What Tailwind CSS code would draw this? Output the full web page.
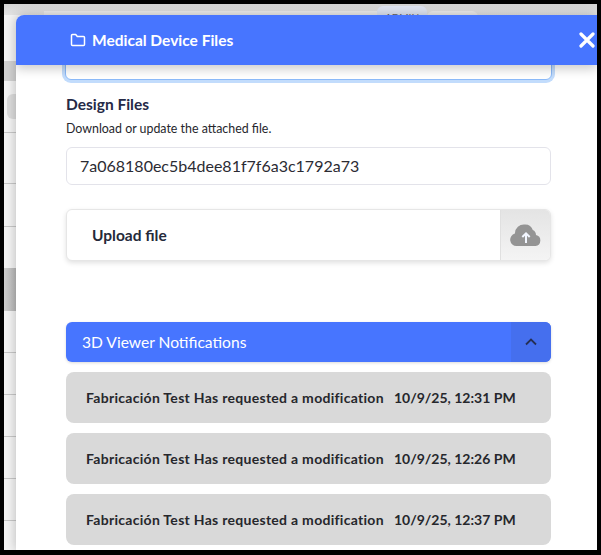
<!DOCTYPE html>
<html>
<head>
  <title>Medical Device Files</title>
  <script src="https://cdn.jsdelivr.net/npm/@tailwindcss/browser@4"></script>
</head>
<body class="bg-black font-['Lato','Noto_Sans',sans-serif]">
  <div class="h-[555px] w-[601px] overflow-hidden bg-black pt-[4px] pl-[4px] pr-[4px] pb-[5px]">
    <div class="relative flex h-[546px] w-[593px] flex-col overflow-hidden bg-[#f4f4f4]">

      <!-- Page behind the modal -->
      <div class="absolute inset-0">
        <div class="h-[11px] bg-gradient-to-b from-[#d4d4d4] to-[#e4e4e4]"></div>
        <div class="absolute left-[40px] top-[7px] h-[8px] w-[333px] bg-[#ececec]"></div>
        <div class="absolute left-[373px] top-[2px] h-[12px] w-[50px] rounded-t-md bg-[#dfe5f2] pt-[6px] text-center text-[10px] leading-[10px] text-[#666]">ADMIN</div>
        <div class="absolute left-[423px] top-[7px] h-[8px] w-[51px] rounded-t-md bg-[#ececec]"></div>
        <div class="absolute left-0 top-[57px] h-[20px] w-3 bg-[#d2d2d2]"></div>
        <div class="absolute left-[3px] top-[90px] h-[25px] w-[9px] rounded-l-md bg-[#dcdcdc]"></div>
        <div class="absolute left-0 top-[128px] h-px w-3 bg-[#c8c8c8]"></div>
        <div class="absolute left-0 top-[179px] h-px w-3 bg-[#c8c8c8]"></div>
        <div class="absolute left-0 top-[222px] h-px w-3 bg-[#c8c8c8]"></div>
        <div class="absolute left-0 top-[264px] h-[43px] w-3 bg-gradient-to-r from-[#cfcfcf] to-[#b8b8b8]"></div>
        <div class="absolute left-0 top-[348px] h-px w-3 bg-[#c8c8c8]"></div>
        <div class="absolute left-0 top-[390px] h-px w-3 bg-[#c8c8c8]"></div>
        <div class="absolute left-0 top-[432px] h-px w-3 bg-[#c8c8c8]"></div>
        <div class="absolute left-0 top-[474px] h-px w-3 bg-[#c8c8c8]"></div>
        <div class="absolute left-0 top-[516px] h-px w-3 bg-[#c8c8c8]"></div>
      </div>

      <!-- Modal -->
      <div class="relative mt-[11px] ml-3 flex h-[535px] w-[581px] flex-col overflow-hidden rounded-tl-lg bg-white shadow-[0_0_12px_rgba(0,0,0,0.25)]">
        <div class="z-10 flex h-[50px] shrink-0 items-center bg-[#4775ff] pl-[54px] pr-[2px] text-white shadow-[0_4px_10px_rgba(0,0,0,0.2)]">
          <svg class="mr-[6px] h-[16px] w-[16px]" viewBox="0 0 16 16" fill="none" stroke="currentColor" stroke-width="1.500" stroke-linejoin="round">
            <path d="M1.500 3.500a1 1 0 0 1 1-1h3.200l1.600 1.900h6.200a1 1 0 0 1 1 1v7a1 1 0 0 1-1 1h-11a1 1 0 0 1-1-1z"/>
          </svg>
          <span class="pt-[1px] text-[15.500px] font-bold leading-none">Medical Device Files</span>
          <svg class="ml-auto h-[16px] w-[16px]" viewBox="0 0 16 16" fill="none" stroke="currentColor" stroke-width="3.200" stroke-linecap="round">
            <path d="M2 2l12 12M14 2L2 14"/>
          </svg>
        </div>

        <div class="flex flex-col pl-[50px] pr-[46px]">
          <!-- Input cut off by the header -->
          <div class="-mx-[1px] -mt-[10px] h-[25px] rounded-md border border-[#8ab9f8] bg-white shadow-[0_0_0_3px_#c2dcfc]"></div>

          <div class="mt-[15px] text-[15.500px] font-bold leading-[18px] text-[#252a47]">Design Files</div>
          <div class="mt-[8px] text-[12.400px] leading-[15px] text-[#26262c]">Download or update the attached file.</div>

          <div class="mt-[11px] flex h-[38px] items-center rounded-md border border-[#e3e3ea] bg-white px-[13px] text-[16px] text-[#2b2b33]">7a068180ec5b4dee81f7f6a3c1792a73</div>

          <div class="mt-[24px] flex h-[52px] overflow-hidden rounded-md border border-[#e6e6e6] bg-white shadow-[0_2px_5px_rgba(0,0,0,0.12)]">
            <div class="flex flex-1 items-center pl-[25px] pt-[1px] text-[15.500px] font-bold text-[#252a3a]">Upload file</div>
            <div class="flex w-[50px] items-center justify-center border-l border-[#e0e0e0] bg-gradient-to-b from-[#e4e4e4] to-[#f4f4f4]">
              <svg class="h-[24px] w-[32px]" viewBox="0 0 32 24">
                <path fill="#949494" d="M6.500 23a6.300 6.300 0 0 1-1.600-12.400A9 9 0 0 1 15 1.500a8 8 0 0 1 7.800 5.600A5.600 5.600 0 0 1 26 12a5.600 5.600 0 0 1-.5 11z"/>
                <path fill="none" stroke="#f2f6ff" stroke-width="2" d="M16 20V10.500M12.300 14L16 10.300l3.700 3.700"/>
              </svg>
            </div>
          </div>

          <div class="mt-[61px] flex h-[40px] overflow-hidden rounded-md bg-[#4775ff] shadow-[0_1px_3px_rgba(0,0,0,0.15)]">
            <div class="flex flex-1 items-center pl-[16px] pt-[1px] text-[15.600px] text-white">3D Viewer Notifications</div>
            <div class="flex w-[40px] items-center justify-center bg-[#456fee]">
              <svg class="h-[12px] w-[12px]" viewBox="0 0 12 12" fill="none" stroke="#252f55" stroke-width="1.800">
                <path d="M1 8.500l5-5 5 5"/>
              </svg>
            </div>
          </div>

          <div class="mt-[10px] flex flex-col gap-[10px] text-[14px] font-bold text-[#26272c]">
            <div class="flex h-[51px] items-center gap-[10px] rounded-lg bg-[#d9d9d9] pl-[20px]">
              <span class="tracking-[0.29px]">Fabricación Test Has requested a modification</span><span>10/9/25, 12:31 PM</span>
            </div>
            <div class="flex h-[51px] items-center gap-[10px] rounded-lg bg-[#d9d9d9] pl-[20px]">
              <span class="tracking-[0.29px]">Fabricación Test Has requested a modification</span><span>10/9/25, 12:26 PM</span>
            </div>
            <div class="flex h-[51px] items-center gap-[10px] rounded-lg bg-[#d9d9d9] pl-[20px]">
              <span class="tracking-[0.29px]">Fabricación Test Has requested a modification</span><span>10/9/25, 12:37 PM</span>
            </div>
          </div>
        </div>
      </div>
    </div>
  </div>
</body>
</html>
